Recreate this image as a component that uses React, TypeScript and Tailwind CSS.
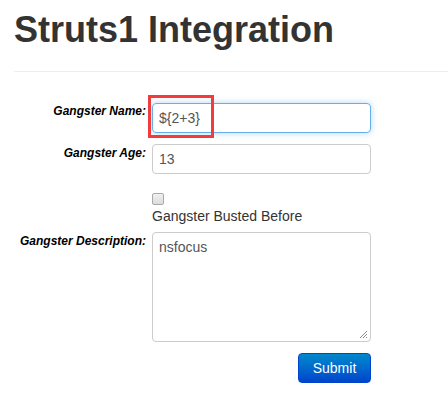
export default function App() {
  return (
    <div className="min-h-[400px] bg-white pl-[14px] font-['Liberation_Sans',Arial,sans-serif] text-[#333]">
      <h1 className="mt-[10px] text-[36px] font-bold leading-[40px] text-[#333]">Struts1 Integration</h1>
      <div className="mt-[21px] h-px bg-[#eeeeee]" />

      <form className="mt-[31px] flex flex-col">
        <div className="flex">
          <label className="w-[132px] text-right text-[12px] font-bold italic leading-[16px] text-black">
            Gangster Name:
          </label>
          <div className="relative ml-[6px]">
            <div className="flex h-[30px] w-[219px] items-center rounded-[4px] border border-[#66afe9] px-[6px] text-[14px] text-[#555] shadow-[0_0_6px_rgba(102,175,233,0.5)]">
              {"${2+3}"}
            </div>
            <div className="absolute left-[-4px] top-[-8px] h-[43px] w-[66px] border-[3px] border-[#f23b3b]" />
          </div>
        </div>

        <div className="mt-[11px] flex">
          <label className="w-[132px] pt-[1px] text-right text-[12px] font-bold italic leading-[16px] text-black">
            Gangster Age:
          </label>
          <div className="ml-[6px] flex h-[30px] w-[219px] items-center rounded-[4px] border border-[#cccccc] px-[6px] text-[14px] text-[#555]">
            13
          </div>
        </div>

        <div className="ml-[138px] mt-[19px] flex flex-col">
          <span className="h-[12px] w-[12px] rounded-[2px] border border-[#a9a9a9] bg-gradient-to-b from-[#f0f0f0] to-[#dcdcdc]" />
          <span className="mt-[1px] text-[14px] leading-[20px] text-[#333]">Gangster Busted Before</span>
        </div>

        <div className="mt-[6px] flex">
          <label className="w-[132px] pt-[1px] text-right text-[12px] font-bold italic leading-[16px] text-black">
            Gangster Description:
          </label>
          <div className="relative ml-[6px] h-[110px] w-[219px] rounded-[4px] border border-[#cccccc] px-[6px] pt-[4px] text-[14px] leading-[20px] text-[#555]">
            nsfocus
            <svg className="absolute bottom-[2px] right-[2px]" width="9" height="9" viewBox="0 0 9 9">
              <path d="M8 1L1 8M8 4L4 8M8 7L7 8" stroke="#8a8a8a" strokeWidth="1" />
            </svg>
          </div>
        </div>

        <div className="ml-[284px] mt-[11px]">
          <button
            type="button"
            className="h-[30px] w-[73px] rounded-[4px] border border-[#0044cc] bg-gradient-to-b from-[#0088cc] to-[#0044cc] text-[14px] text-white"
          >
            Submit
          </button>
        </div>
      </form>
    </div>
  )
}
